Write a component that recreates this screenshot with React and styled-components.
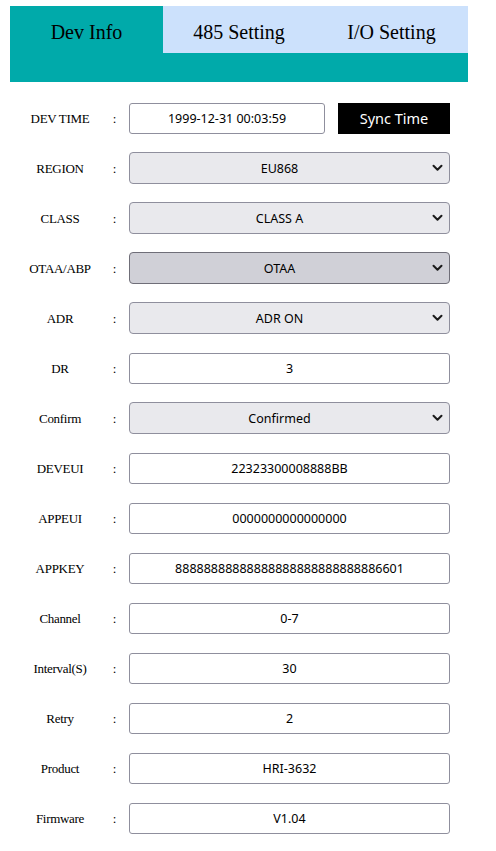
import React from 'react';
import styled, { createGlobalStyle } from 'styled-components';

const GlobalStyle = createGlobalStyle`
  body {
    margin: 0;
    background: #ffffff;
    font-family: 'Liberation Serif', 'Times New Roman', serif;
  }
`;

const Page = styled.div`
  width: 496px;
  padding-top: 6px;
`;

const Header = styled.div`
  margin-left: 10px;
  width: 458px;
  height: 76px;
  background-color: #00aaaa;
`;

const TabBar = styled.div`
  display: grid;
  grid-template-columns: 153px 152px 153px;
  height: 47px;
`;

const Tab = styled.div`
  display: flex;
  align-items: center;
  justify-content: center;
  background-color: ${(p) => (p.$active ? '#00aaaa' : '#cce1fc')};
  font-family: 'Liberation Serif', 'Times New Roman', serif;
  font-size: 20px;
  color: #000;
  padding-top: 5px;
  box-sizing: border-box;
`;

const Form = styled.div`
  display: flex;
  flex-direction: column;
  margin-top: 11px;
`;

const Row = styled.div`
  display: flex;
  align-items: center;
  height: 50px;
  padding-left: 10px;
`;

const Label = styled.div`
  width: 100px;
  text-align: center;
  font-family: 'Liberation Serif', 'Times New Roman', serif;
  font-size: 13px;
  letter-spacing: -0.3px;
  color: #000;
  padding-top: 1px;
`;

const Colon = styled.div`
  width: 9px;
  margin-right: 10px;
  text-align: center;
  font-family: 'Liberation Serif', 'Times New Roman', serif;
  font-size: 13px;
  padding-top: 1px;
`;

const TextInput = styled.input`
  box-sizing: border-box;
  width: ${(p) => p.$width || '321px'};
  height: 31px;
  margin: 0;
  border: 1px solid #8f8f9d;
  border-radius: 3px;
  background: #fff;
  text-align: center;
  font-family: 'Noto Sans', 'Liberation Sans', sans-serif;
  font-size: 12.5px;
  color: #000;
  outline: none;
  padding: 0 4px;
`;

const SyncButton = styled.button`
  box-sizing: border-box;
  width: 112px;
  height: 31px;
  margin-left: 13px;
  border: none;
  background: #000;
  color: #fff;
  font-family: 'Noto Sans', 'Liberation Sans', sans-serif;
  font-size: 14.5px;
  padding: 0 0 1px;
`;

const SelectWrap = styled.div`
  position: relative;
  width: 321px;
  height: 32px;
`;

const Select = styled.select`
  box-sizing: border-box;
  width: 100%;
  height: 100%;
  margin: 0;
  appearance: none;
  border: 1px solid ${(p) => (p.$hover ? '#6f6e78' : '#8f8f9d')};
  border-radius: 4px;
  background: ${(p) => (p.$hover ? '#d0d0d7' : '#e9e9ed')};
  text-align: center;
  text-align-last: center;
  font-family: 'Noto Sans', 'Liberation Sans', sans-serif;
  font-size: 12.5px;
  color: #000;
  padding: 0 20px 0 0;
  outline: none;
`;

const Chevron = styled.svg`
  position: absolute;
  right: 7px;
  top: 12px;
  width: 11px;
  height: 8px;
  pointer-events: none;
`;

function Dropdown({ value, hover }) {
  return (
    <SelectWrap>
      <Select $hover={hover} defaultValue={value}>
        <option value={value}>{value}</option>
      </Select>
      <Chevron viewBox="0 0 11 8">
        <path d="M1.5 1.8 L5.5 5.8 L9.5 1.8" fill="none" stroke="#1a1a1a" strokeWidth="2" strokeLinecap="round" strokeLinejoin="round" />
      </Chevron>
    </SelectWrap>
  );
}

const fields = [
  { label: 'REGION', select: 'EU868' },
  { label: 'CLASS', select: 'CLASS A' },
  { label: 'OTAA/ABP', select: 'OTAA', hover: true },
  { label: 'ADR', select: 'ADR ON' },
  { label: 'DR', value: '3' },
  { label: 'Confirm', select: 'Confirmed' },
  { label: 'DEVEUI', value: '22323300008888BB' },
  { label: 'APPEUI', value: '0000000000000000' },
  { label: 'APPKEY', value: '88888888888888888888888888886601' },
  { label: 'Channel', value: '0-7' },
  { label: 'Interval(S)', value: '30' },
  { label: 'Retry', value: '2' },
  { label: 'Product', value: 'HRI-3632' },
  { label: 'Firmware', value: 'V1.04' },
];

export default function App() {
  return (
    <Page>
      <GlobalStyle />
      <Header>
        <TabBar>
          <Tab $active>Dev Info</Tab>
          <Tab>485 Setting</Tab>
          <Tab>I/O Setting</Tab>
        </TabBar>
      </Header>
      <Form>
        <Row>
          <Label>DEV TIME</Label>
          <Colon>:</Colon>
          <TextInput $width="196px" defaultValue="1999-12-31 00:03:59" />
          <SyncButton>Sync Time</SyncButton>
        </Row>
        {fields.map((f) => (
          <Row key={f.label}>
            <Label>{f.label}</Label>
            <Colon>:</Colon>
            {f.select ? (
              <Dropdown value={f.select} hover={f.hover} />
            ) : (
              <TextInput defaultValue={f.value} />
            )}
          </Row>
        ))}
      </Form>
    </Page>
  );
}
